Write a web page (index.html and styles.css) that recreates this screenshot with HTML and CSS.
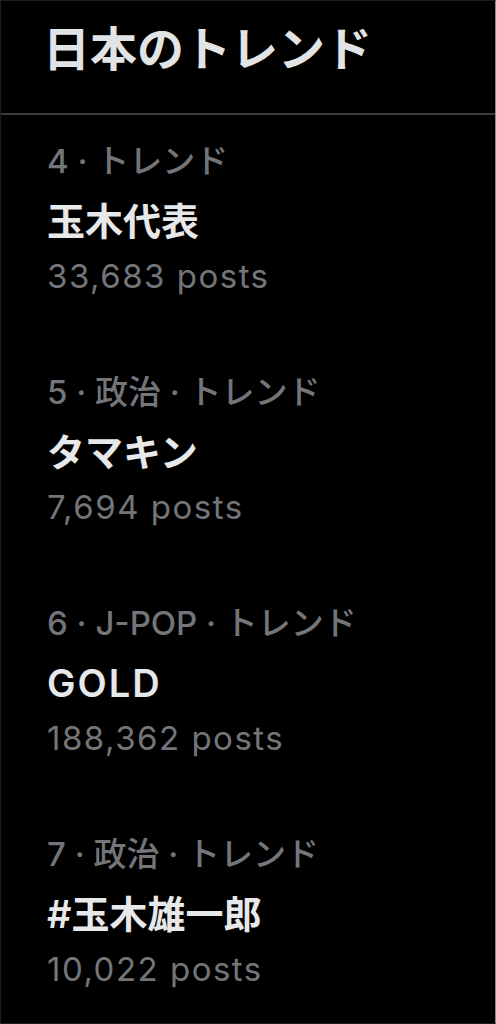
FILE: index.html
```html
<!DOCTYPE html>
<html lang="ja">
  <head>
    <meta charset="UTF-8" />
    <meta name="viewport" content="width=device-width, initial-scale=1.0" />
    <title>日本のトレンド</title>
    <link rel="stylesheet" href="styles.css">
  </head>
  <body>
    <div class="panel">
      <div class="head">
        <h1>日本のトレンド</h1>
      </div>
      <div class="trends">
        <div class="trend">
          <p class="meta">4 · トレンド</p>
          <p class="name">玉木代表</p>
          <p class="count">33,683 posts</p>
        </div>
        <div class="trend">
          <p class="meta">5 · 政治 · トレンド</p>
          <p class="name">タマキン</p>
          <p class="count">7,694 posts</p>
        </div>
        <div class="trend">
          <p class="meta">6 · J-POP · トレンド</p>
          <p class="name latin">GOLD</p>
          <p class="count">188,362 posts</p>
        </div>
        <div class="trend">
          <p class="meta">7 · 政治 · トレンド</p>
          <p class="name">#玉木雄一郎</p>
          <p class="count">10,022 posts</p>
        </div>
      </div>
    </div>
  </body>
</html>
```

FILE: styles.css
```css
*{
    padding: 0;
    margin: 0;
    box-sizing: border-box;
}
body{
    background-color: #000;
    font-family: Inter, "Noto Sans CJK JP", sans-serif;
}
.panel{
    width: 496px;
    height: 1024px;
    overflow: hidden;
    border: 1px solid #1c1d1f;
    border-right-color: #8a8d91;
}
.head{
    height: 114px;
    padding: 20px 0 0 42px;
    border-bottom: 2px solid #3b3d41;
}
h1{
    color: #e2e3e4;
    font-size: 47px;
    line-height: 56px;
    font-weight: 600;
}
.trend{
    padding: 26px 0 55px 46px;
}
.meta{
    color: #747579;
    font-size: 33px;
    line-height: 40px;
    font-weight: 500;
}
.name{
    color: #e7e8e9;
    font-size: 38px;
    line-height: 80px;
    font-weight: 600;
}
.name.latin{
    letter-spacing: 2px;
}
.count{
    color: #747579;
    font-size: 33px;
    line-height: 30px;
    letter-spacing: 1.5px;
}
```
